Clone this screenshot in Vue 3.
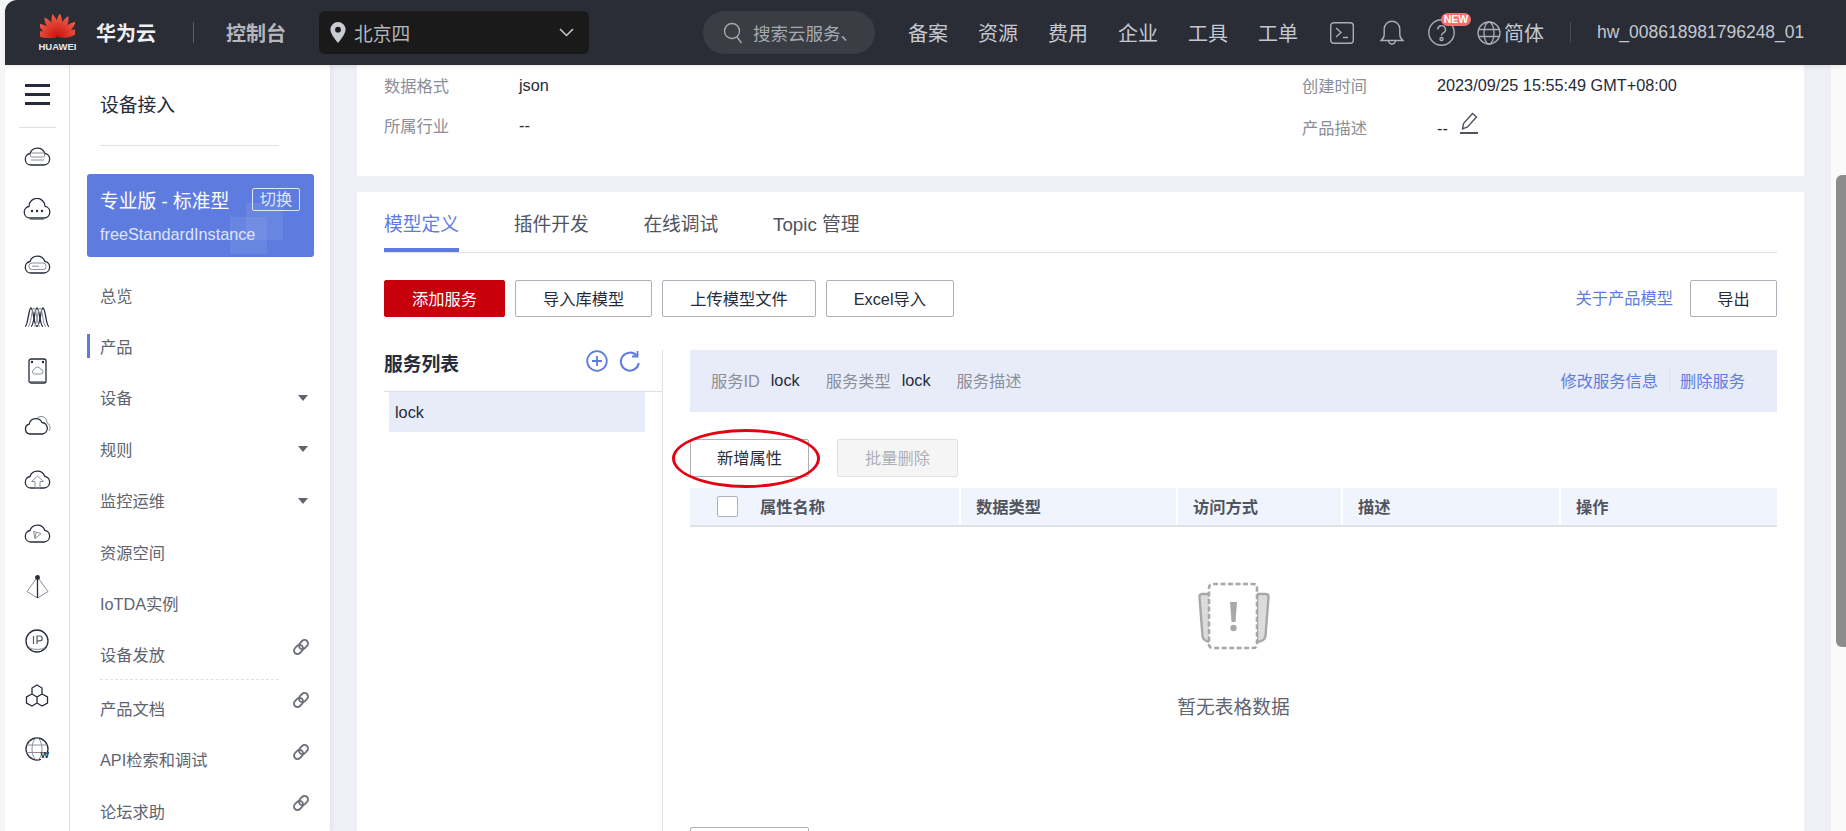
<template>
  <div class="page">
    <div class="gutter"></div>
    <div class="frame">
      <header class="topbar">
        <div class="logo">
          <svg width="35" height="25" viewBox="0 0 35 25">
            <defs>
              <linearGradient id="petal" x1="0" y1="0" x2="0" y2="1">
                <stop offset="0" stop-color="#f2604a" />
                <stop offset="1" stop-color="#c8140f" />
              </linearGradient>
            </defs>
            <g transform="translate(17.5 24.5)">
              <path v-for="a in petalAngles" :key="a" class="petal" :transform="`rotate(${a})`" d="M0 -1C-4.6 -7 -5 -16 -1.4 -24C3.6 -18 3.8 -8 0 -1Z" />
            </g>
          </svg>
          <span class="logo-text">HUAWEI</span>
        </div>
        <span class="brand">华为云</span>
        <i class="top-divider divider-a"></i>
        <span class="console">控制台</span>
        <div class="region">
          <svg width="16" height="21" viewBox="0 0 16 21">
            <path fill="#c9ccd3" fill-rule="evenodd" d="M8 0a7.6 7.6 0 0 1 7.6 7.6C15.600 12.500 8 21 8 21S.4 12.500 .4 7.600A7.600 7.600 0 0 1 8 0Zm0 4.800a2.900 2.900 0 1 0 0 5.800 2.900 2.900 0 0 0 0-5.800Z" />
          </svg>
          <span class="region-name">北京四</span>
          <svg class="chevron" width="15" height="9" viewBox="0 0 15 9">
            <path d="M1 1l6.500 6.500L14 1" fill="none" stroke="#c9ccd3" stroke-width="1.500" />
          </svg>
        </div>
        <div class="search">
          <svg width="20" height="22" viewBox="0 0 20 22" fill="none" stroke="#a6a9b0" stroke-width="1.400">
            <circle cx="9" cy="9" r="7.500" />
            <path d="M14 15l4.500 6" />
          </svg>
          <span class="search-text">搜索云服务、</span>
        </div>
        <nav class="top-nav">
          <a v-for="n in topNav" :key="n">{{ n }}</a>
        </nav>
        <svg class="icon-term" width="24" height="22" viewBox="0 0 24 22" fill="none" stroke="#a9adb6" stroke-width="1.400">
          <rect x=".7" y=".7" width="22.600" height="20.600" rx="3" />
          <path d="M6 6l5 4.500-5 4.500M13 15.500h5" />
        </svg>
        <svg class="icon-bell" width="24" height="26" viewBox="0 0 24 26" fill="none" stroke="#a9adb6" stroke-width="1.400">
          <path d="M1 20.500c2-1.500 3.200-2.500 3.200-6V9a7.800 7.800 0 0 1 15.600 0v5.500c0 3.500 1.200 4.500 3.200 6Z" />
          <path d="M8.500 20.500a3.500 3.500 0 1 0 7 0" />
        </svg>
        <div class="help">
          <svg width="27" height="27" viewBox="0 0 27 27" fill="none" stroke="#a9adb6" stroke-width="1.400">
            <circle cx="13.500" cy="13.500" r="12.700" />
            <path d="M9.800 10.500a3.800 3.800 0 1 1 5.600 3.300c-1.300.8-1.900 1.300-1.900 2.900" />
            <circle cx="13.500" cy="20" r="1.500" />
          </svg>
          <span class="new-badge">NEW</span>
        </div>
        <svg class="icon-globe" width="24" height="24" viewBox="0 0 24 24" fill="none" stroke="#a9adb6" stroke-width="1.300">
          <circle cx="12" cy="12" r="11" />
          <ellipse cx="12" cy="12" rx="5" ry="11" />
          <path d="M1.500 8.500h21M1.500 15.500h21" />
        </svg>
        <span class="lang">简体</span>
        <i class="top-divider divider-b"></i>
        <span class="user">hw_008618981796248_01</span>
      </header>

      <div class="body">
        <aside class="rail">
          <div class="burger"><i></i><i></i><i></i></div>
          <div class="rail-line"></div>
          <div class="rail-icons">
            <div class="rail-icon">
              <svg width="27" height="22" viewBox="0 0 27 22">
                <path d="M7 21a5.800 5.800 0 0 1-1-11.500A7.800 7.800 0 0 1 20.800 9.300 5.900 5.900 0 0 1 20 21Z" />
                <rect class="thin" x="6.500" y="9" width="14" height="4" rx="1" />
                <path class="thin" d="M7 16h13" />
              </svg>
            </div>
            <div class="rail-icon">
              <svg width="28" height="22" viewBox="0 0 28 22">
                <path d="M7 20a5.800 5.800 0 0 1-1-11.500A8 8 0 0 1 22 8.300 5.900 5.900 0 0 1 21 20Z" />
                <path class="dots" d="M9 13h.01M14 13h.01M19 13h.01" />
                <path class="thin" d="M7 21.500h14" />
              </svg>
            </div>
            <div class="rail-icon">
              <svg width="27" height="22" viewBox="0 0 27 22">
                <path d="M7 21a5.800 5.800 0 0 1-1-11.500A7.800 7.800 0 0 1 20.800 9.300 5.900 5.900 0 0 1 20 21Z" />
                <rect class="thin" x="5" y="11" width="17" height="6.500" rx="3" />
                <path class="thin" d="M8 14.200h7M18.500 14.200h.5" />
              </svg>
            </div>
            <div class="rail-icon">
              <svg width="26" height="20" viewBox="0 0 26 20">
                <path d="M1 19.500C4 19.500 4.500 1 7 1S10 19.500 13 19.500" />
                <path d="M7 19.500C10 19.500 10.500 1 13 1S16 19.500 19 19.500" />
                <path d="M13 19.500C16 19.500 16.500 1 19 1S22 19.500 25 19.500" />
                <path class="thin" d="M4 19.500C7 19.500 7.500 1 10 1S13 19.500 16 19.500" />
                <path class="thin" d="M10 19.500C13 19.500 13.500 1 16 1S19 19.500 22 19.500" />
              </svg>
            </div>
            <div class="rail-icon">
              <svg width="19" height="26" viewBox="0 0 19 26">
                <rect x="1" y="1" width="17" height="24" rx="2" />
                <path class="thin" d="M1.500 23.500h16M6.500 16a2.300 2.300 0 0 1-.3-4.500 3.400 3.400 0 0 1 6.500-.1 2.300 2.300 0 0 1 .1 4.600Z" />
                <path class="dots" d="M4 4h.01M15 4h.01" />
              </svg>
            </div>
            <div class="rail-icon">
              <svg width="27" height="20" viewBox="0 0 27 20">
                <path d="M6 19a5 5 0 0 1-.8-9.800A6.800 6.800 0 0 1 18 7.500 5.800 5.800 0 0 1 18.500 19Z" />
                <path class="thin" d="M13 3.200A6 6 0 0 1 21 2.800a6 6 0 0 1 2 5A5.500 5.500 0 0 1 25 16" />
              </svg>
            </div>
            <div class="rail-icon">
              <svg width="27" height="20" viewBox="0 0 27 20">
                <path d="M7 19a5.800 5.800 0 0 1-1-11.500A7.800 7.800 0 0 1 20.800 7.300 5.900 5.900 0 0 1 20 19Z" />
                <path class="thin" d="M13.500 7l6 5.500h-3.500V19h-5v-6.500H7.500Z" />
              </svg>
            </div>
            <div class="rail-icon">
              <svg width="27" height="20" viewBox="0 0 27 20">
                <path d="M7 19a5.800 5.800 0 0 1-1-11.500A7.800 7.800 0 0 1 20.800 7.300 5.900 5.900 0 0 1 20 19Z" />
                <path class="thin" d="M9.500 8.500L17 10.500 11 15.500ZM11 15.500L12 10" />
              </svg>
            </div>
            <div class="rail-icon">
              <svg width="23" height="24" viewBox="0 0 23 24">
                <path d="M11.500 2L1 16.500l10.500 6.500L22 16.500Z" class="thin" />
                <path d="M11.500 2v21" />
                <circle class="solid" cx="11.500" cy="2.500" r="1.800" />
              </svg>
            </div>
            <div class="rail-icon">
              <svg width="24" height="24" viewBox="0 0 24 24">
                <circle cx="12" cy="12" r="11" />
                <path class="thin" d="M4 18.500c4 2.500 12 2.500 16 0" />
                <path class="ip" d="M8.500 7v8M12 15V7h2.800a2.300 2.300 0 0 1 0 4.800H12" />
              </svg>
            </div>
            <div class="rail-icon">
              <svg width="24" height="23" viewBox="0 0 24 23">
                <path d="M12 1l5 3v6l-5 3-5-3V4ZM7 10l5 3v6l-5 3-5.500-3v-6ZM17 10l5.500 3v6L17 22l-5-3v-6Z" />
              </svg>
            </div>
            <div class="rail-icon">
              <svg width="25" height="25" viewBox="0 0 25 25">
                <circle cx="12" cy="12" r="11" />
                <ellipse class="thin" cx="12" cy="12" rx="5" ry="11" />
                <path class="thin" d="M1.500 8h21M1.500 15.500h21" />
                <rect class="white" x="16" y="17" width="9" height="8" />
              </svg>
              <span class="w-mark">W</span>
            </div>
          </div>
        </aside>

        <aside class="sidebar">
          <div class="side-title">设备接入</div>
          <div class="side-line"></div>
          <div class="instance">
            <div class="deco deco-a"></div>
            <div class="deco deco-b"></div>
            <div class="instance-top">
              <span>专业版 - 标准型</span>
              <span class="switch">切换</span>
            </div>
            <div class="instance-name">freeStandardInstance</div>
          </div>
          <ul class="menu">
            <li v-for="m in menu" :key="m.label" :class="{ on: m.active, dash: m.dash }">
              <span>{{ m.label }}</span>
              <i v-if="m.arrow" class="arrow"></i>
              <svg v-if="m.link" class="link" width="18" height="18" viewBox="0 0 18 18" fill="none" stroke="#6b6f7a" stroke-width="1.800">
                <g transform="rotate(-45 9 9)">
                  <rect x=".5" y="5.500" width="10" height="7" rx="3.500" />
                  <rect x="7.500" y="5.500" width="10" height="7" rx="3.500" />
                </g>
              </svg>
            </li>
          </ul>
        </aside>

        <main class="main">
          <section class="panel info">
            <span class="label">数据格式</span>
            <span class="value">json</span>
            <span class="label">创建时间</span>
            <span class="value">2023/09/25 15:55:49 GMT+08:00</span>
            <span class="label">所属行业</span>
            <span class="value">--</span>
            <span class="label low">产品描述</span>
            <span class="value desc">
              <span class="dashes">--</span>
              <svg width="20" height="22" viewBox="0 0 20 22" fill="none" stroke="#50545f" stroke-width="1.400">
                <path d="M3.500 17L4.500 11.500 13.500 1.500 17.500 5 8.500 15Z" />
                <path d="M1 21h18" stroke-width="2" />
              </svg>
            </span>
          </section>

          <section class="panel model">
            <div class="tabs">
              <a v-for="(t, i) in tabs" :key="t" :class="{ on: i === 0 }">{{ t }}</a>
            </div>

            <div class="toolbar">
              <button class="btn primary">添加服务</button>
              <button class="btn">导入库模型</button>
              <button class="btn">上传模型文件</button>
              <button class="btn">Excel导入</button>
              <a class="about">关于产品模型</a>
              <button class="btn export">导出</button>
            </div>

            <div class="split">
              <div class="services">
                <div class="services-head">
                  <span class="services-title">服务列表</span>
                  <svg width="22" height="22" viewBox="0 0 22 22" fill="none" stroke="#5e7ce0" stroke-width="1.800">
                    <circle cx="11" cy="11" r="9.800" />
                    <path d="M11 6v10M6 11h10" />
                  </svg>
                  <svg class="reload" width="21" height="22" viewBox="0 0 21 22" fill="none" stroke="#5e7ce0" stroke-width="2">
                    <path d="M17.500 5.500A9 9 0 1 0 19.800 13" />
                    <path d="M18.500 1v5.500h-5.500" stroke-width="1.800" />
                  </svg>
                </div>
                <div class="service-row">lock</div>
              </div>

              <div class="detail">
                <div class="service-bar">
                  <span class="label">服务ID</span><span class="bar-value">lock</span>
                  <span class="label">服务类型</span><span class="bar-value">lock</span>
                  <span class="label">服务描述</span>
                  <a class="bar-link first">修改服务信息</a>
                  <a class="bar-link">删除服务</a>
                </div>

                <div class="attr-actions">
                  <button class="btn add-attr">新增属性</button>
                  <button class="btn disabled">批量删除</button>
                  <div class="ring"></div>
                </div>

                <div class="thead">
                  <div v-for="c in columns" :key="c.label" class="th" :style="{ width: c.width + 'px' }">
                    <span v-if="c.check" class="check"></span>
                    {{ c.label }}
                  </div>
                </div>

                <div class="empty">
                  <svg width="72" height="68" viewBox="0 0 72 68">
                    <path d="M12 12H4.500Q1.500 12 1.500 15L4.500 54Q5 59 12 60Z" fill="#dcdcdc" stroke="#a8a8a8" stroke-width="2.400" />
                    <path d="M59 12H67.500Q70.500 12 70.500 15L67.500 54Q67 59 59 60Z" fill="#dcdcdc" stroke="#a8a8a8" stroke-width="2.400" />
                    <path d="M15 2H55Q59 2 59 6V62Q59 66 55 66H15Q11 66 11 62V6Q11 2 15 2Z" fill="#fff" stroke="#a8a8a8" stroke-width="2.600" stroke-dasharray="5 2.500" />
                    <path d="M32 20h7l-1.500 20h-4Z" fill="#a8a8a8" />
                    <circle cx="35.500" cy="46" r="3.200" fill="#a8a8a8" />
                  </svg>
                  <div class="empty-text">暂无表格数据</div>
                </div>

                <button class="btn add-attr"></button>
              </div>
            </div>
          </section>
        </main>

        <div class="track"><div class="thumb"></div></div>
      </div>
    </div>
  </div>
</template>

<script setup>
const petalAngles = [-75, -52, -30, -9, 9, 30, 52, 75]

const topNav = ['备案', '资源', '费用', '企业', '工具', '工单']

const menu = [
  { label: '总览' },
  { label: '产品', active: true },
  { label: '设备', arrow: true },
  { label: '规则', arrow: true },
  { label: '监控运维', arrow: true },
  { label: '资源空间' },
  { label: 'IoTDA实例' },
  { label: '设备发放', link: true, dash: true },
  { label: '产品文档', link: true },
  { label: 'API检索和调试', link: true },
  { label: '论坛求助', link: true }
]

const tabs = ['模型定义', '插件开发', '在线调试', 'Topic 管理']

const columns = [
  { label: '属性名称', width: 271, check: true },
  { label: '数据类型', width: 217 },
  { label: '访问方式', width: 165 },
  { label: '描述', width: 218 },
  { label: '操作', width: 216 }
]
</script>

<style>
html, body {
  margin: 0;
  overflow: hidden;
  background: #fff;
}
</style>

<style scoped>
.page {
  display: flex;
  width: 1846px;
  height: 831px;
  overflow: hidden;
  background: #f6f6f6;
  font-family: "Liberation Sans", "Noto Sans CJK SC", sans-serif;
  font-size: 16.25px;
  color: #252b3a;
}
.gutter {
  width: 5px;
  flex: none;
}
.frame {
  width: 1841px;
  display: flex;
  flex-direction: column;
}
.topbar {
  height: 65px;
  flex: none;
  display: flex;
  align-items: center;
  background: #2a2d36;
  border-top-left-radius: 12px;
  color: #c4c8d0;
  position: relative;
  z-index: 2;
  box-shadow: 0 2px 4px rgba(0, 0, 0, .08);
}
.logo {
  width: 35px;
  margin-left: 35px;
  display: flex;
  flex-direction: column;
  align-items: center;
}
.petal {
  fill: url(#petal);
}
.logo-text {
  font-size: 9.500px;
  font-weight: bold;
  line-height: 12px;
  margin-top: 3px;
  color: #e8e8ea;
}
.brand {
  margin-left: 21px;
  font-size: 20px;
  font-weight: bold;
  color: #f0f0f2;
}
.top-divider {
  width: 1px;
  height: 21px;
  background: #5a5d66;
}
.divider-a {
  margin-left: 37px;
}
.console {
  margin-left: 32px;
  font-size: 20px;
  font-weight: bold;
  color: #b4b6bc;
}
.region {
  margin-left: 33px;
  width: 270px;
  height: 43px;
  box-sizing: border-box;
  padding-left: 11px;
  display: flex;
  align-items: center;
  background: #1a1a1b;
  border-radius: 6px;
}
.region-name {
  margin-left: 8px;
  font-size: 18.75px;
  color: #b4b6bc;
}
.chevron {
  margin-left: auto;
  margin-right: 15px;
}
.search {
  margin-left: 114px;
  width: 172px;
  height: 43px;
  box-sizing: border-box;
  padding-left: 20px;
  display: flex;
  align-items: center;
  background: #3a3d44;
  border-radius: 22px;
  color: #a6a9b0;
  font-size: 17.5px;
}
.search-text {
  margin-left: 10px;
}
.top-nav {
  margin-left: 33px;
  display: flex;
  gap: 30px;
  font-size: 20px;
}
.icon-term {
  margin-left: 32px;
}
.icon-bell {
  margin-left: 26px;
}
.help {
  margin-left: 24px;
  display: flex;
  position: relative;
}
.new-badge {
  position: absolute;
  left: 13px;
  top: -6px;
  width: 30px;
  height: 13px;
  border-radius: 7px;
  background: #f66f6a;
  color: #fff;
  font-size: 10.5px;
  font-weight: bold;
  line-height: 13px;
  text-align: center;
}
.icon-globe {
  margin-left: 22px;
}
.lang {
  margin-left: 3px;
  font-size: 20px;
}
.divider-b {
  margin-left: 26px;
  background: #4a4d56;
}
.user {
  margin-left: 26px;
  font-size: 17.5px;
  white-space: nowrap;
}

.body {
  flex: 1;
  min-height: 0;
  display: flex;
}
.rail {
  width: 65px;
  flex: none;
  box-sizing: border-box;
  background: #fff;
  border-right: 1px solid #dfe1e8;
  padding-top: 19px;
  display: flex;
  flex-direction: column;
  align-items: center;
}
.burger {
  width: 25px;
  height: 21px;
  display: flex;
  flex-direction: column;
  justify-content: space-between;
}
.burger i {
  height: 3px;
  background: #252b3a;
}
.rail-line {
  width: 37px;
  height: 1px;
  margin-top: 22px;
  background: #dfe1e8;
}
.rail-icons {
  width: 100%;
}
.rail-icon {
  height: 54px;
  display: flex;
  align-items: center;
  justify-content: center;
  position: relative;
}
.rail-icon svg {
  fill: none;
  stroke: #252b3a;
  stroke-width: 1.300;
}
.rail-icon .thin {
  stroke: #8a8e99;
  stroke-width: 1;
}
.rail-icon .dots {
  stroke-width: 2.400;
  stroke-linecap: round;
}
.rail-icon .ip {
  stroke: #555a66;
  stroke-width: 1.200;
}
.rail-icon .solid {
  fill: #252b3a;
}
.rail-icon .white {
  fill: #fff;
  stroke: none;
}
.w-mark {
  position: absolute;
  right: 20px;
  bottom: 16px;
  font-size: 9px;
  font-weight: bold;
  line-height: 9px;
}

.sidebar {
  width: 260px;
  flex: none;
  background: #fff;
  box-shadow: 2px 0 4px rgba(0, 0, 0, .05);
  position: relative;
  z-index: 1;
}
.side-title {
  margin: 30px 0 0 30px;
  font-size: 18.750px;
  line-height: 22px;
}
.side-line {
  width: 179px;
  height: 1px;
  margin: 28px 0 0 30px;
  background: #dfe1e8;
}
.instance {
  position: relative;
  overflow: hidden;
  width: 227px;
  height: 83px;
  margin: 28px 0 0 17px;
  box-sizing: border-box;
  padding: 13px 14px 0 13px;
  background: #5e7ce0;
  border-radius: 3px;
  color: #fff;
}
.deco {
  position: absolute;
  width: 37px;
  height: 37px;
  background: rgba(255, 255, 255, .07);
}
.deco-a {
  left: 159px;
  top: 29px;
}
.deco-b {
  left: 143px;
  top: 43px;
}
.instance-top {
  position: relative;
  display: flex;
  align-items: center;
  justify-content: space-between;
  height: 25px;
  font-size: 18.750px;
}
.switch {
  width: 48px;
  height: 23px;
  box-sizing: border-box;
  border: 1px solid #dfe5fa;
  border-radius: 2px;
  color: #dfe5fa;
  font-size: 16.250px;
  line-height: 21px;
  text-align: center;
}
.instance-name {
  position: relative;
  margin-top: 12px;
  font-size: 16.250px;
  line-height: 20px;
  color: #dfe5fa;
}
.menu {
  list-style: none;
  margin: 12px 0 0;
  padding: 0;
  color: #60646f;
}
.menu li {
  position: relative;
  height: 51.400px;
  display: flex;
  align-items: center;
  padding-left: 30px;
}
.menu li.dash {
  margin-bottom: 2px;
}
.menu li.dash::after {
  content: "";
  position: absolute;
  left: 30px;
  bottom: 0;
  width: 179px;
  border-bottom: 1px dashed #dfe1e8;
}
.menu li.on::before {
  content: "";
  position: absolute;
  left: 17px;
  top: 14px;
  width: 3px;
  height: 24px;
  background: #5e7ce0;
}
.arrow {
  position: absolute;
  left: 228px;
  top: 23px;
  border-left: 5px solid transparent;
  border-right: 5px solid transparent;
  border-top: 6px solid #60646f;
}
.link {
  position: absolute;
  left: 222px;
  top: 9px;
}

.main {
  flex: 1;
  min-width: 0;
  padding: 0 27px;
  background: #eef0f5;
  display: flex;
  flex-direction: column;
  gap: 16px;
}
.panel {
  background: #fff;
}
.info {
  height: 111px;
  flex: none;
  box-sizing: border-box;
  padding: 0 27px;
  display: grid;
  grid-template-columns: 135px 783px 135px 1fr;
  grid-auto-rows: 40px;
  align-items: center;
}
.label {
  color: #8a8e99;
}
.value {
  color: #252b3a;
}
.low {
  padding-top: 4px;
}
.dashes {
  padding-top: 6px;
}
.desc {
  display: flex;
  align-items: center;
  gap: 11px;
}
.desc svg {
  margin-top: -5px;
}
.model {
  flex: 1;
  min-height: 0;
  padding: 0 27px;
}
.tabs {
  height: 61px;
  display: flex;
  gap: 54.700px;
  box-sizing: border-box;
  border-bottom: 1px solid #dfe1e8;
  font-size: 18.750px;
  color: #50545f;
}
.tabs a {
  height: 57px;
  box-sizing: border-box;
  padding-top: 21px;
  line-height: 24px;
}
.tabs a.on {
  color: #5e7ce0;
  height: 60px;
  border-bottom: 4px solid #5e7ce0;
}
.toolbar {
  display: flex;
  align-items: center;
  gap: 10px;
  margin-top: 27px;
}
.btn {
  height: 37px;
  padding: 0 27px 2px;
  box-sizing: border-box;
  background: #fff;
  border: 1px solid #adb0b8;
  border-radius: 2px;
  color: #252b3a;
  font: inherit;
}
.btn.primary {
  background: #c7000b;
  border-color: #c7000b;
  color: #fff;
}
.about {
  margin-left: auto;
  margin-right: 7px;
  margin-bottom: 3px;
  color: #5e7ce0;
}
.export {
  width: 87px;
  padding: 0 0 2px;
}
.split {
  display: flex;
  margin-top: 33px;
}
.services {
  width: 279px;
  flex: none;
  box-sizing: border-box;
  border-right: 1px solid #dfe1e8;
  height: 500px;
}
.services-head {
  height: 42px;
  box-sizing: border-box;
  display: flex;
  align-items: flex-start;
  border-bottom: 1px solid #dfe1e8;
}
.services-title {
  margin-right: auto;
  margin-top: 4px;
  font-size: 18.750px;
  font-weight: bold;
  line-height: 22px;
}
.reload {
  margin: 0 22px 0 11px;
}
.service-row {
  margin: 0 17px 0 5px;
  height: 40px;
  padding-left: 6px;
  line-height: 40px;
  background: #e8ecf8;
}
.detail {
  flex: 1;
  min-width: 0;
  margin-left: 27px;
}
.service-bar {
  height: 62px;
  box-sizing: border-box;
  padding: 0 32px 2px 21px;
  display: flex;
  align-items: center;
  background: #e8ecf8;
}
.bar-value {
  margin: 0 26px 0 11px;
}
.bar-link {
  color: #5e7ce0;
}
.bar-link.first {
  margin-left: auto;
  margin-right: 10px;
  padding-right: 11px;
  border-right: 1px solid #dfe1e8;
}
.attr-actions {
  position: relative;
  display: flex;
  gap: 28px;
  margin-top: 27px;
}
.add-attr {
  width: 119px;
  height: 38px;
  padding: 0 0 2px;
}
.disabled {
  width: 121px;
  height: 38px;
  padding: 0 0 2px;
  background: #f5f5f6;
  border-color: #dfe1e6;
  color: #adb0b8;
}
.ring {
  position: absolute;
  left: -18px;
  top: -10px;
  width: 148px;
  height: 59px;
  box-sizing: border-box;
  border: 3.500px solid #e60012;
  border-radius: 50%;
}
.thead {
  display: flex;
  height: 39px;
  margin-top: 11px;
  box-sizing: border-box;
  border-bottom: 2px solid #dfe1e8;
}
.th {
  box-sizing: border-box;
  padding: 0 0 2px 15px;
  display: flex;
  align-items: center;
  background: #f0f4fc;
  border-right: 2px solid #fff;
  font-weight: bold;
  color: #50545f;
}
.th:last-child {
  border-right: 0;
}
.check {
  width: 21px;
  height: 21px;
  margin: 2px 22px 0 12px;
  box-sizing: border-box;
  background: #fff;
  border: 1px solid #adb0b8;
  border-radius: 2px;
}
.empty {
  height: 300px;
  box-sizing: border-box;
  padding-top: 55px;
  display: flex;
  flex-direction: column;
  align-items: center;
}
.empty-text {
  margin-top: 47px;
  font-size: 18.750px;
  line-height: 22px;
  color: #60646f;
}
.track {
  width: 15px;
  flex: none;
  background: #fafafa;
  display: flex;
  justify-content: flex-end;
}
.thumb {
  width: 10px;
  height: 472px;
  margin-top: 110px;
  background: #8c8c8c;
  border-radius: 6px 0 0 6px;
}
</style>
